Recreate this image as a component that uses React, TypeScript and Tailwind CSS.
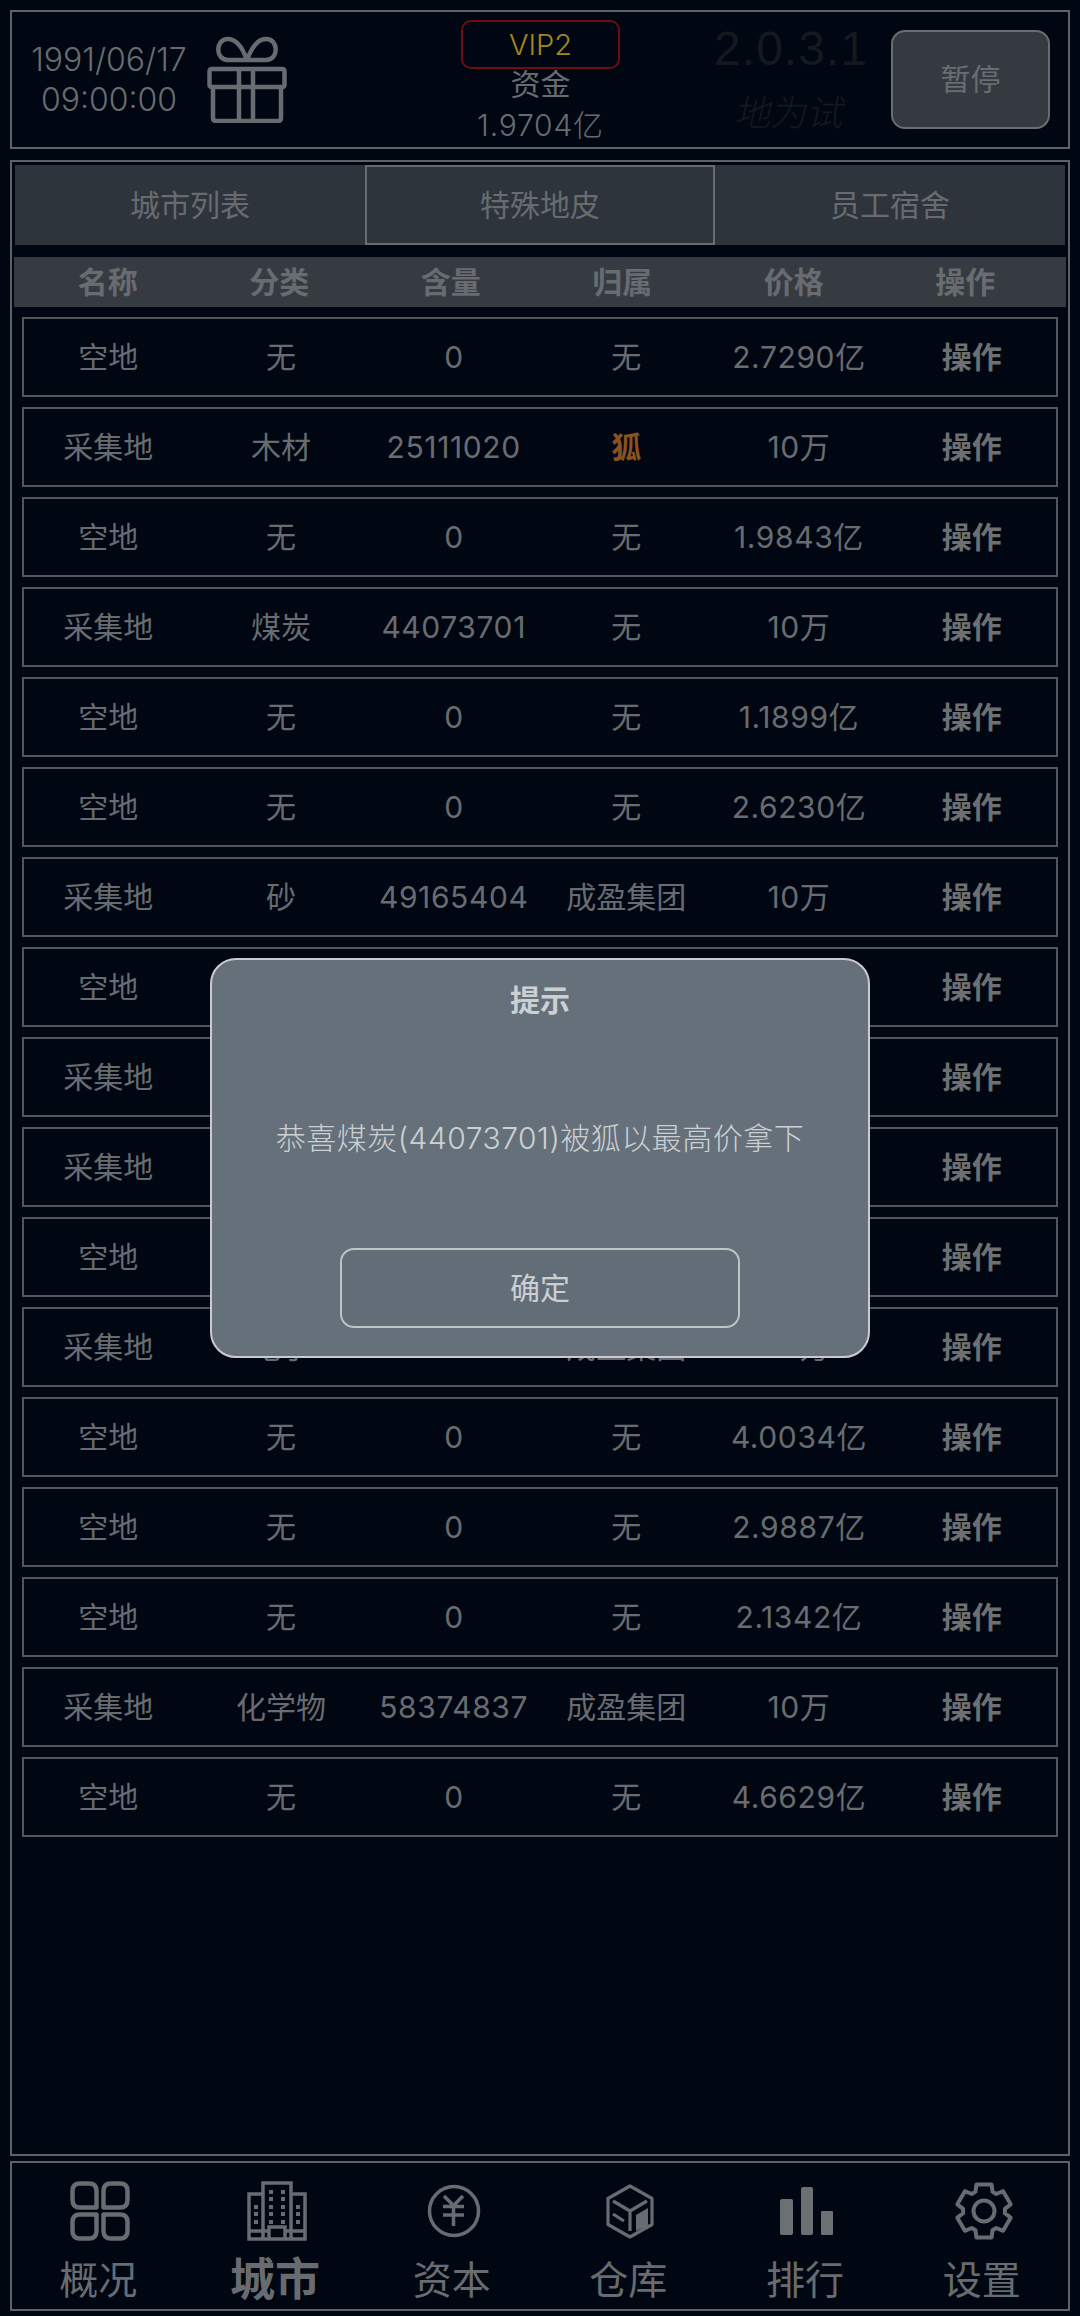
const rows = [
  ["空地", "无", "0", "无", "2.7290亿"],
  ["采集地", "木材", "25111020", "狐", "10万"],
  ["空地", "无", "0", "无", "1.9843亿"],
  ["采集地", "煤炭", "44073701", "无", "10万"],
  ["空地", "无", "0", "无", "1.1899亿"],
  ["空地", "无", "0", "无", "2.6230亿"],
  ["采集地", "砂", "49165404", "成盈集团", "10万"],
  ["空地", "", "", "", ""],
  ["采集地", "", "", "", ""],
  ["采集地", "", "", "", ""],
  ["空地", "", "", "", ""],
  ["采集地", "电子", "91647145", "成盈集团", "10万"],
  ["空地", "无", "0", "无", "4.0034亿"],
  ["空地", "无", "0", "无", "2.9887亿"],
  ["空地", "无", "0", "无", "2.1342亿"],
  ["采集地", "化学物", "58374837", "成盈集团", "10万"],
  ["空地", "无", "0", "无", "4.6629亿"],
];

const heads = ["名称", "分类", "含量", "归属", "价格", "操作"];

function gearPath() {
  const pt = (deg: number, r: number) => {
    const a = (deg * Math.PI) / 180;
    return `${(30 + r * Math.cos(a)).toFixed(2)} ${(30 + r * Math.sin(a)).toFixed(2)}`;
  };
  let d = "";
  for (let i = 0; i < 6; i++) {
    const a = -90 + i * 60;
    d += `${i === 0 ? "M" : "L"}${pt(a - 24, 21)} L${pt(a - 16, 27.5)} L${pt(a + 16, 27.5)} L${pt(a + 24, 21)} `;
  }
  return d + "Z";
}

function GiftIcon() {
  return (
    <svg width="80" height="87" viewBox="0 0 80 87" fill="none" stroke="#686c70" strokeWidth="4.5" strokeLinejoin="round">
      <path d="M40 24 H21 C8 24 8 3 21 3 C30 3 36 13 40 24 C44 13 50 3 59 3 C72 3 72 24 59 24 H40" />
      <rect x="2.5" y="33" width="75" height="18" rx="2" />
      <path d="M6 51 V82 Q6 85 9 85 H71 Q74 85 74 82 V51" />
      <path d="M32 33 V85 M46 33 V85" />
    </svg>
  );
}

function OverviewIcon() {
  return (
    <svg width="60" height="60" viewBox="0 0 60 60" fill="none" stroke="#686c70" strokeWidth="4.5" strokeLinejoin="round">
      <path d="M10 2.5 H19 Q26.5 2.5 26.5 10 V26.5 H10 Q2.5 26.5 2.5 19 V10 Q2.5 2.5 10 2.5 Z" />
      <path d="M41 2.5 H50 Q57.5 2.5 57.5 10 V19 Q57.5 26.5 50 26.5 H33.5 V10 Q33.5 2.5 41 2.5 Z" />
      <path d="M10 33.5 H26.5 V50 Q26.5 57.5 19 57.5 H10 Q2.5 57.5 2.5 50 V41 Q2.5 33.5 10 33.5 Z" />
      <path d="M33.5 33.5 H50 Q57.5 33.5 57.5 41 V50 Q57.5 57.5 50 57.5 H41 Q33.5 57.5 33.5 50 Z" />
    </svg>
  );
}

function CityIcon() {
  const mid = [9, 16, 24, 31, 39];
  const side = [24, 31, 39];
  return (
    <svg width="60" height="60" viewBox="0 0 60 60" fill="none" stroke="#686c70" strokeWidth="3.5">
      <path d="M16 58 V2 H44 V58" />
      <path d="M16 13 H2 V58 H58 V13 H44" />
      <path d="M2 50 H22 M38 50 H58" />
      <path d="M22 58 V46 H38 V58" />
      <g fill="#686c70" stroke="none">
        {mid.map((y) => (
          <g key={y}>
            <rect x="22" y={y} width="4" height="4" />
            <rect x="34" y={y} width="4" height="4" />
          </g>
        ))}
        {side.map((y) => (
          <g key={y}>
            <rect x="7" y={y} width="4" height="4" />
            <rect x="49" y={y} width="4" height="4" />
          </g>
        ))}
      </g>
    </svg>
  );
}

function YenIcon() {
  return (
    <svg width="54" height="54" viewBox="0 0 54 54" fill="none" stroke="#686c70" strokeWidth="3.5">
      <circle cx="27" cy="27" r="24.5" />
      <path d="M17 12 L26.5 21.5 L36 12 M16 22.5 H37 M16 31 H37 M26.5 21 V42" />
    </svg>
  );
}

function CubeIcon() {
  return (
    <svg width="48" height="55" viewBox="0 0 48 55" fill="none" stroke="#686c70" strokeWidth="3.2" strokeLinejoin="round">
      <path d="M24 2 L46 14.5 V40.5 L24 53 L2 40.5 V14.5 Z" />
      <path d="M7 17 L24 27 L41 17 M24 27 V47 M7 30 L18 37" />
      <path d="M30 31 L42 24 V42 L30 47 Z" fill="#686c70" stroke="none" />
    </svg>
  );
}

function RankIcon() {
  return (
    <svg width="54" height="48" viewBox="0 0 54 48" fill="#6b7072">
      <rect x="0" y="12" width="13" height="36" rx="2" />
      <rect x="21" y="0" width="12" height="48" rx="2" />
      <rect x="41" y="24" width="12" height="24" rx="1" />
    </svg>
  );
}

function GearIcon() {
  return (
    <svg width="60" height="60" viewBox="0 0 60 60" fill="none" stroke="#686c70" strokeWidth="4" strokeLinejoin="round">
      <path d={gearPath()} />
      <circle cx="30" cy="30" r="10.5" />
    </svg>
  );
}

const navs = [
  { label: "概况", icon: <OverviewIcon /> },
  { label: "城市", icon: <CityIcon />, active: true },
  { label: "资本", icon: <YenIcon /> },
  { label: "仓库", icon: <CubeIcon /> },
  { label: "排行", icon: <RankIcon /> },
  { label: "设置", icon: <GearIcon /> },
];

export default function App() {
  return (
    <div className="relative flex h-[2316px] w-[1080px] flex-col overflow-hidden bg-[#000712] px-[10px] pt-[10px] pb-[5px] font-[Inter,'Noto_Sans_CJK_SC',sans-serif] text-[30px] text-[#686c70]">
      <header className="flex h-[139px] shrink-0 items-start border-2 border-[#5c6266]">
        <div className="mt-[28px] w-[194px] text-center text-[32px] leading-[40px] font-light whitespace-nowrap">
          <div>1991/06/17</div>
          <div>09:00:00</div>
        </div>
        <div className="mt-[24px] ml-px">
          <GiftIcon />
        </div>
        <div className="mt-[8px] ml-[174px] flex w-[159px] flex-col items-center">
          <div className="flex h-[49px] w-full items-center justify-center rounded-[10px] border-2 border-[#6f0d12] text-[29px] font-light text-[#a5861c]">VIP2</div>
          <div className="leading-[30px]">资金</div>
          <div className="mt-[6px] leading-[40px] font-light tracking-[0.8px] whitespace-nowrap">1.9704亿</div>
        </div>
        <div className="mt-[12px] ml-[96px] flex w-[150px] flex-col items-center text-[#14191f]">
          <div className="font-['Liberation_Sans',sans-serif] text-[48px] leading-[50px] tracking-[1px] whitespace-nowrap">2.0.3.1</div>
          <div className="mt-[19px] -skew-x-12 text-[36px] leading-[40px] font-extralight whitespace-nowrap">地为试</div>
        </div>
        <button className="mt-[18px] ml-[25px] flex h-[99px] w-[159px] items-center justify-center rounded-[14px] border-2 border-[#686d71] bg-[#353a41] text-[30px] text-[#696d71]">暂停</button>
      </header>

      <main className="mt-[11px] flex min-h-0 flex-1 flex-col border-2 border-[#5c6266] p-[3px]">
        <div className="grid h-[80px] shrink-0 grid-cols-3 bg-[#2e343b]">
          <div className="flex items-center justify-center">城市列表</div>
          <div className="flex items-center justify-center border-2 border-[#686d71]">特殊地皮</div>
          <div className="flex items-center justify-center">员工宿舍</div>
        </div>
        <div className="-mx-px mt-[12px] grid h-[50px] shrink-0 grid-cols-6 items-center bg-[#363b42] pr-[15px] pl-[8px] text-center font-bold">
          {heads.map((h) => (
            <div key={h}>{h}</div>
          ))}
        </div>
        <div className="mt-[10px] mr-[7px] ml-[7px] flex flex-col gap-[10px]">
          {rows.map((r, i) => (
            <div key={i} className="grid h-[80px] grid-cols-6 items-center text-center shadow-[inset_0_0_0_2px_#50565b]">
              {r.map((c, j) => (
                <div key={j} className={c === "狐" ? "font-bold text-[#8a5220]" : /\d{2}/.test(c) ? "tracking-[0.6px] whitespace-nowrap" : "whitespace-nowrap"}>
                  {c}
                </div>
              ))}
              <div className="font-bold text-[#6d7073]">操作</div>
            </div>
          ))}
        </div>
      </main>

      <nav className="mt-[5px] h-[150px] shrink-0 border-2 border-[#5c6266]">
        <div className="-mx-[2px] grid h-full grid-cols-6">
          {navs.map((n) => (
            <div key={n.label} className="flex flex-col items-center">
              <div className="mt-[18px] ml-[4px] flex h-[60px] items-center justify-center">{n.icon}</div>
              <div className={n.active ? "mt-[9px] text-[45px] leading-[60px] font-bold" : "mt-[9px] text-[39px] leading-[60px]"}>{n.label}</div>
            </div>
          ))}
        </div>
      </nav>

      <div className="fixed inset-0 flex items-center justify-center">
        <div className="flex h-[400px] w-[660px] flex-col items-center rounded-[26px] border-2 border-[#c8ccd0] bg-[#65707b] text-[#ccd0d3]">
          <div className="mt-[19px] leading-[42px] font-bold">提示</div>
          <div className="flex flex-1 items-center pt-[7px] font-light tracking-[0.5px]">恭喜煤炭(44073701)被狐以最高价拿下</div>
          <button className="mb-[28px] flex h-[80px] w-[400px] items-center justify-center rounded-[14px] border-2 border-[#bfc3c6] bg-[#636d78] text-[30px]">确定</button>
        </div>
      </div>
    </div>
  );
}
